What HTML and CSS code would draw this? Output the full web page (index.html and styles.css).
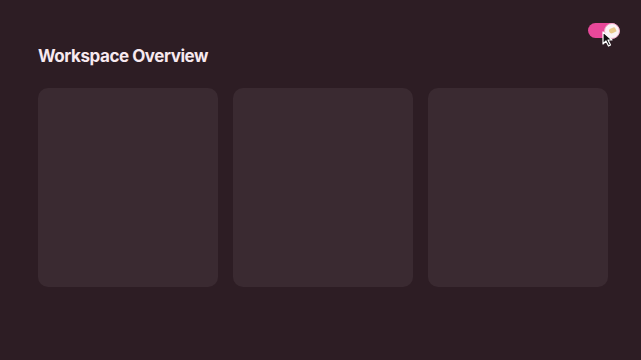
FILE: index.html
```html
<!DOCTYPE html>
<html>
<head>
<meta charset="utf-8">
<link rel="stylesheet" href="styles.css">
</head>
<body>
<div class="page">
  <div class="topbar">
    <div class="toggle">
      <span class="thumb"><span class="thumb-dot"></span></span>
      <svg class="cursor" width="12" height="16" viewBox="0 0 12 16"><path d="M1 1 L1 13 L4 10 L6.5 15 L8.5 14 L6 9 L10 9 Z" fill="#111" stroke="#fff" stroke-width="1.2" stroke-linejoin="round"/></svg>
    </div>
  </div>
  <h1 class="title">Workspace Overview</h1>
  <div class="cards">
    <div class="card"></div>
    <div class="card"></div>
    <div class="card"></div>
  </div>
</div>
</body>
</html>
```
FILE: styles.css
```css
html, body { margin: 0; padding: 0; }
body {
  background: #2d1d24;
  width: 641px;
  height: 360px;
  overflow: hidden;
  font-family: "Inter", "Liberation Sans", sans-serif;
}
.page {
  padding: 0 22px 0 38px;
}
.topbar {
  display: flex;
  justify-content: flex-end;
  padding-top: 23px;
  height: 15px;
}
.toggle {
  position: relative;
  width: 31px;
  height: 15px;
  border-radius: 8px;
  background: #e8489a;
}
.thumb {
  position: absolute;
  right: -1px;
  top: -0.5px;
  width: 16px;
  height: 16px;
  box-sizing: border-box;
  border-radius: 50%;
  background: #fbf3f6;
  border: 1px solid #f0a8c8;
  display: flex;
  align-items: center;
  justify-content: center;
}
.thumb-dot {
  width: 7px;
  height: 5px;
  border-radius: 3px 3px 1px 4px;
  background: #e9c98c;
  transform: rotate(-25deg);
}
.cursor {
  position: absolute;
  left: 14px;
  top: 8px;
}
.title {
  margin: 8px 0 0;
  font-size: 17px;
  font-weight: 700;
  letter-spacing: -0.45px;
  color: #f7e9ef;
  line-height: 20px;
}
.cards {
  display: grid;
  grid-template-columns: repeat(3, 180px);
  gap: 15px;
  margin-top: 22px;
}
.card {
  height: 199px;
  border-radius: 10px;
  background: #3a2a31;
}
```
